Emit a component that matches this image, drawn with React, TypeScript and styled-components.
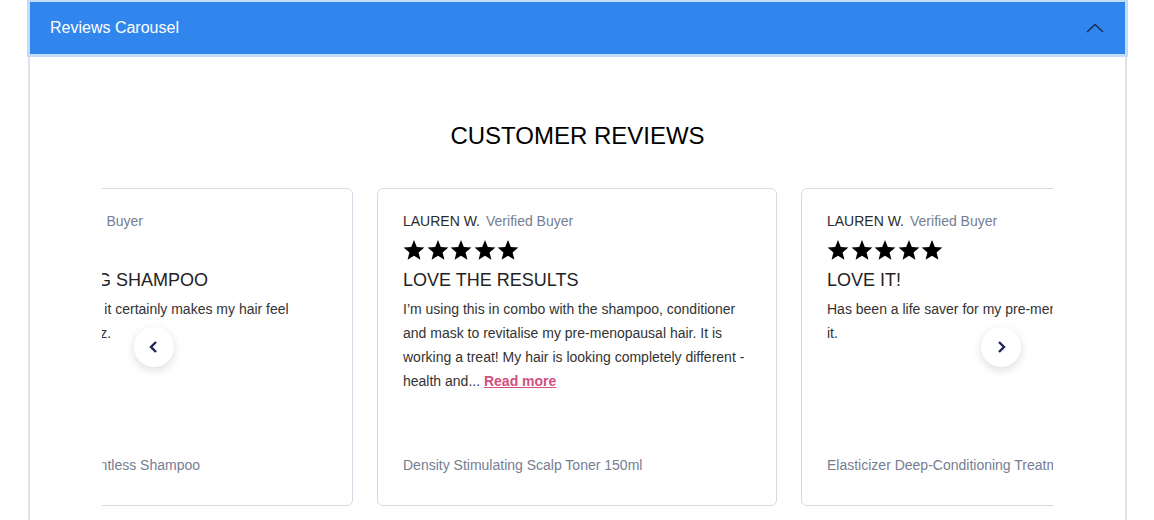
import React from "react";
import styled, { createGlobalStyle } from "styled-components";

const GlobalStyle = createGlobalStyle`
  html, body { margin: 0; padding: 0; background: #ffffff; }
  body { font-family: "Liberation Sans", Arial, sans-serif; }
  * { box-sizing: border-box; }
`;

const Page = styled.div`
  padding: 2px 27px 0 28px;
`;

const Panel = styled.section`
  border: 2px solid #dfe2e9;
  border-top: 0;
  background: #ffffff;
  height: 540px;
`;

const Header = styled.button`
  position: relative;
  z-index: 1;
  display: flex;
  align-items: center;
  justify-content: space-between;
  width: 100%;
  height: 52px;
  padding: 0 21px 0 20px;
  border: 0;
  background: #3186ee;
  color: #ffffff;
  font-family: "Liberation Sans", Arial, sans-serif;
  font-size: 16px;
  box-shadow: 0 0 0 3px #c4dbf9;
  cursor: pointer;
`;

const Body = styled.div`
  padding: 68px 72px 0 72px;
`;

const Title = styled.h2`
  margin: 0 0 38px 0;
  text-align: center;
  font-weight: 400;
  font-size: 24px;
  line-height: 28px;
  color: #000000;
`;

const Viewport = styled.div`
  position: relative;
  overflow: hidden;
`;

const Track = styled.div<{ $offset: number }>`
  display: flex;
  gap: 24px;
  transform: translateX(${(p) => p.$offset}px);
`;

const Card = styled.article`
  flex: 0 0 400px;
  width: 400px;
  min-width: 0;
  height: 318px;
  display: flex;
  flex-direction: column;
  padding: 23px 25px 30px 25px;
  border: 1px solid #d9d9e6;
  border-radius: 6px;
  background: #ffffff;
  color: #333333;
  overflow: hidden;
`;

const NameRow = styled.div`
  display: flex;
  align-items: baseline;
  gap: 6px;
  font-size: 14px;
  line-height: 18px;
  white-space: nowrap;
`;

const Name = styled.span`
  color: #2b2b2b;
`;

const Verified = styled.span`
  color: #767d93;
`;

const Stars = styled.div`
  display: flex;
  gap: 1.5px;
  margin-top: 9px;
  height: 22px;
`;

const ReviewTitle = styled.h3`
  margin: 7px 0 0 0;
  font-weight: 400;
  font-size: 18px;
  line-height: 24px;
  color: #222222;
  white-space: nowrap;
`;

const Text = styled.p`
  margin: 5px 0 0 0;
  font-size: 14px;
  line-height: 24px;
  color: #333333;
  white-space: nowrap;
`;

const ReadMore = styled.a`
  color: #d1507f;
  font-weight: 700;
  text-decoration: underline;
  cursor: pointer;
`;

const Product = styled.div`
  margin-top: auto;
  font-size: 14px;
  line-height: 20px;
  color: #767d93;
  white-space: nowrap;
`;

const Arrow = styled.button<{ $side: "left" | "right" }>`
  position: absolute;
  top: 50%;
  ${(p) => (p.$side === "left" ? "left: 32px;" : "right: 32px;")}
  width: 40px;
  height: 40px;
  margin-top: -20px;
  border: 0;
  border-radius: 50%;
  background: #ffffff;
  box-shadow: 0 3px 10px rgba(0, 0, 0, 0.14);
  display: flex;
  align-items: center;
  justify-content: center;
  padding: 0;
  cursor: pointer;
`;

const Star = () => (
  <svg width="22" height="22" viewBox="0 0 24 24">
    <polygon
      points="12,1 15.1,8.6 23.3,9.3 17,14.6 19,22.6 12,18.3 5,22.6 7,14.6 0.7,9.3 8.9,8.6"
      fill="#000"
    />
  </svg>
);

type Review = {
  name: string;
  title: string;
  lines: React.ReactNode[];
  product: string;
};

const reviews: Review[] = [
  {
    name: "CLAIRE W.",
    title: "MOISTURISING SHAMPOO",
    lines: ["Love this shampoo, it certainly makes my hair feel", "so soft with less frizz."],
    product: "Protecting Hair Scentless Shampoo",
  },
  {
    name: "LAUREN W.",
    title: "LOVE THE RESULTS",
    lines: [
      "I’m using this in combo with the shampoo, conditioner",
      "and mask to revitalise my pre-menopausal hair. It is",
      "working a treat! My hair is looking completely different -",
      <>
        health and... <ReadMore>Read more</ReadMore>
      </>,
    ],
    product: "Density Stimulating Scalp Toner 150ml",
  },
  {
    name: "LAUREN W.",
    title: "LOVE IT!",
    lines: ["Has been a life saver for my pre-menopausal hair, love", "it."],
    product: "Elasticizer Deep-Conditioning Treatment",
  },
];

export default function App() {
  return (
    <>
      <GlobalStyle />
      <Page>
        <Panel>
          <Header>
            <span>Reviews Carousel</span>
            <svg width="18" height="10" viewBox="0 0 18 10">
              <polyline points="1,9 9,1.5 17,9" fill="none" stroke="#1a2b4c" strokeWidth="1.4" />
            </svg>
          </Header>
          <Body>
            <Title>CUSTOMER REVIEWS</Title>
            <Viewport>
              <Track $offset={-149}>
                {reviews.map((r, i) => (
                  <Card key={i}>
                    <NameRow>
                      <Name>{r.name}</Name>
                      <Verified>Verified Buyer</Verified>
                    </NameRow>
                    <Stars>
                      {[0, 1, 2, 3, 4].map((s) => (
                        <Star key={s} />
                      ))}
                    </Stars>
                    <ReviewTitle>{r.title}</ReviewTitle>
                    <Text>
                      {r.lines.map((l, j) => (
                        <React.Fragment key={j}>
                          {l}
                          {j < r.lines.length - 1 && <br />}
                        </React.Fragment>
                      ))}
                    </Text>
                    <Product>{r.product}</Product>
                  </Card>
                ))}
              </Track>
              <Arrow $side="left" aria-label="Previous">
                <svg width="12" height="14" viewBox="0 0 12 14">
                  <polyline points="8,2 3,7 8,12" fill="none" stroke="#1f2452" strokeWidth="2.4" />
                </svg>
              </Arrow>
              <Arrow $side="right" aria-label="Next">
                <svg width="12" height="14" viewBox="0 0 12 14">
                  <polyline points="4,2 9,7 4,12" fill="none" stroke="#1f2452" strokeWidth="2.4" />
                </svg>
              </Arrow>
            </Viewport>
          </Body>
        </Panel>
      </Page>
    </>
  );
}
